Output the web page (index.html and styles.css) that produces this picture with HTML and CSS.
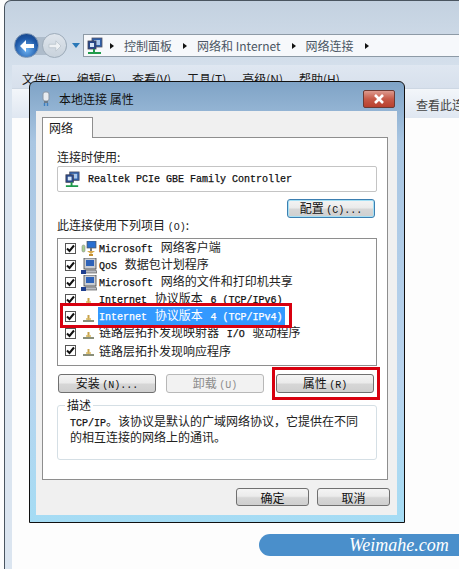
FILE: index.html
```html
<!DOCTYPE html>
<html lang="zh-CN">
<head>
  <meta charset="UTF-8">
  <title>本地连接 属性</title>
  <link rel="stylesheet" href="styles.css">
</head>
<body>

<svg class="defs" width="0" height="0">
  <symbol id="net" viewBox="0 0 18 18">
    <rect x="6" y="1" width="10" height="9" fill="#2f5fa8" stroke="#556" stroke-width=".8"/>
    <rect x="8" y="3" width="6" height="5" fill="#a9c8ee"/>
    <rect x="2" y="4" width="8" height="8" fill="#27498c" stroke="#445" stroke-width=".8"/>
    <rect x="4" y="6" width="4" height="4" fill="#d7e6f7"/>
    <path d="M8 12v3M2 16h13" stroke="#1f9a4b" stroke-width="2"/>
  </symbol>
  <symbol id="client" viewBox="0 0 16 16">
    <rect x="1" y="4" width="3" height="7" rx="1.5" fill="#a8cf8f" stroke="#888" stroke-width=".6"/>
    <rect x="6" y="0" width="9" height="7" fill="#2a6fd0" stroke="#555" stroke-width=".7"/>
    <path d="M10 7v3" stroke="#777" stroke-width="2"/>
    <path d="M6 10h8l-4 3z" fill="#d9a94a"/>
    <rect x="8" y="13" width="4" height="2" fill="#c58f30"/>
  </symbol>
  <symbol id="computer" viewBox="0 0 16 16">
    <rect x="3" y="0" width="12" height="11" fill="#c9ccd2" stroke="#444" stroke-width=".8"/>
    <rect x="5" y="2" width="8" height="6" fill="#2e62b8"/>
    <path d="M4 12h11l1 3H3z" fill="#b8bbc2" stroke="#444" stroke-width=".6"/>
    <rect x="0" y="12" width="5" height="4" fill="#1f3f8f"/>
  </symbol>
  <symbol id="proto" viewBox="0 0 16 16">
    <path d="M2 12h11" stroke="#8a8f7a" stroke-width="2"/>
    <path d="M7.5 6v5" stroke="#c8a24a" stroke-width="2"/>
    <path d="M5 10h5" stroke="#d8b860" stroke-width="1.5"/>
  </symbol>
  <symbol id="check" viewBox="0 0 9 9">
    <path d="M1 4.5l2.5 2.5L8 1.5" fill="none" stroke="#111" stroke-width="2"/>
  </symbol>
</svg>

<div class="explorer">
  <div class="address-row">
    <div class="nav-pill">
      <span class="nav-btn back">
        <svg width="16" height="14" viewBox="0 0 16 14"><path d="M1 7l6-6v4h8v4H7v4z" fill="#fff"/></svg>
      </span>
      <span class="nav-btn forward">
        <svg width="14" height="12" viewBox="0 0 16 14"><path d="M15 7L9 1v4H1v4h8v4z" fill="#eef1f4" stroke="#b4bec8" stroke-width=".8"/></svg>
      </span>
    </div>
    <span class="nav-drop"></span>
    <div class="address">
      <svg class="crumb-icon" width="18" height="18"><use href="#net"/></svg>
      <span class="arrow"></span>
      <span class="crumb">控制面板</span>
      <span class="arrow"></span>
      <span class="crumb">网络和 Internet</span>
      <span class="arrow"></span>
      <span class="crumb">网络连接</span>
      <span class="arrow"></span>
    </div>
  </div>

  <div class="menubar">
    <span>文件(F)</span><span>编辑(E)</span><span>查看(V)</span><span>工具(T)</span><span>高级(N)</span><span>帮助(H)</span>
  </div>
  <div class="cmdbar">查看此连</div>
  <div class="content"></div>
</div>

<div class="dialog">
  <div class="titlebar">
    <svg class="title-icon" width="10" height="16" viewBox="0 0 10 16">
      <rect x="2" y="1" width="6" height="9" rx="2" fill="#e8ecf0" stroke="#8a97a5"/>
      <rect x="3" y="10" width="4" height="2" fill="#6c7c8c"/>
      <path d="M3.5 12v3M6.5 12v3" stroke="#3d7fc0" stroke-width="1.4"/>
    </svg>
    <span class="title-text">本地连接 属性</span>
    <span class="close">
      <svg width="12" height="10" viewBox="0 0 12 10"><path d="M2 1l8 8M10 1L2 9" stroke="#fff" stroke-width="2.6"/></svg>
    </span>
  </div>

  <div class="dialog-body">
    <div class="tab">网络</div>
    <div class="panel">
      <div class="label first">连接时使用:</div>
      <div class="adapter">
        <svg width="17" height="17"><use href="#net"/></svg>
        <span class="mono">Realtek PCIe GBE Family Controller</span>
      </div>
      <div class="config-row"><button class="btn focus config">配置 <small>(C)...</small></button></div>
      <div class="label second">此连接使用下列项目 <small>(O)</small>:</div>

      <div class="list">
        <div class="row">
          <span class="check"><svg width="9" height="9"><use href="#check"/></svg></span>
          <svg class="row-icon" width="16" height="16"><use href="#client"/></svg>
          <span class="row-text"><span class="mono">Microsoft</span> 网络客户端</span>
        </div>
        <div class="row">
          <span class="check"><svg width="9" height="9"><use href="#check"/></svg></span>
          <svg class="row-icon" width="16" height="16"><use href="#computer"/></svg>
          <span class="row-text"><span class="mono">QoS</span> 数据包计划程序</span>
        </div>
        <div class="row">
          <span class="check"><svg width="9" height="9"><use href="#check"/></svg></span>
          <svg class="row-icon" width="16" height="16"><use href="#computer"/></svg>
          <span class="row-text"><span class="mono">Microsoft</span> 网络的文件和打印机共享</span>
        </div>
        <div class="row">
          <span class="check"><svg width="9" height="9"><use href="#check"/></svg></span>
          <svg class="row-icon" width="16" height="16"><use href="#proto"/></svg>
          <span class="row-text"><span class="mono">Internet</span> 协议版本 <span class="mono">6 (TCP/IPv6)</span></span>
        </div>
        <div class="row">
          <span class="check"><svg width="9" height="9"><use href="#check"/></svg></span>
          <svg class="row-icon" width="16" height="16"><use href="#proto"/></svg>
          <span class="row-text selected"><span class="mono">Internet</span> 协议版本 <span class="mono">4 (TCP/IPv4)</span></span>
        </div>
        <div class="row">
          <span class="check"><svg width="9" height="9"><use href="#check"/></svg></span>
          <svg class="row-icon" width="16" height="16"><use href="#proto"/></svg>
          <span class="row-text">链路层拓扑发现映射器 <span class="mono">I/O</span> 驱动程序</span>
        </div>
        <div class="row">
          <span class="check"><svg width="9" height="9"><use href="#check"/></svg></span>
          <svg class="row-icon" width="16" height="16"><use href="#proto"/></svg>
          <span class="row-text">链路层拓扑发现响应程序</span>
        </div>
      </div>

      <div class="action-row">
        <button class="btn">安装 <small>(N)...</small></button>
        <button class="btn disabled">卸载 <small>(U)</small></button>
        <button class="btn">属性 <small>(R)</small></button>
      </div>

      <div class="group">
        <span class="legend">描述</span>
        <p><span class="mono">TCP/IP</span>。该协议是默认的广域网络协议，它提供在不同<br>的相互连接的网络上的通讯。</p>
      </div>
    </div>
    <div class="dialog-buttons">
      <button class="btn">确定</button>
      <button class="btn">取消</button>
    </div>
  </div>
</div>

<div class="mark mark-list"></div>
<div class="mark mark-props"></div>

<div class="watermark">Weimahe.com</div>

</body>
</html>
```

FILE: styles.css
```css
html, body {
  margin: 0;
  height: 100%;
}
body {
  position: relative;
  width: 459px;
  height: 569px;
  overflow: hidden;
  background: #fdfdfd;
  font-family: "Noto Sans CJK SC", "Liberation Sans", sans-serif;
  font-size: 12px;
  color: #1a1a1a;
}
.defs {
  position: absolute;
}
button {
  font-family: inherit;
}
small {
  font-family: "Liberation Mono", monospace;
  font-size: 10px;
}
.mono {
  font-family: "Liberation Mono", monospace;
  font-size: 10px;
  color: #111;
  word-spacing: 0;
  -webkit-text-stroke: .25px #111;
}

/* explorer behind */
.explorer {
  box-sizing: border-box;
  height: 569px;
  margin-left: 4px;
  padding: 33px 0 0 7px;
  border: 1px solid #4a5560;
  border-right: none;
  border-bottom: none;
  border-radius: 7px 0 0 0;
  background: linear-gradient(#c3d1e0, #dbe5f0 90px);
}
.address-row {
  display: flex;
  align-items: center;
  height: 23px;
  margin-left: -7px;
  padding-left: 9px;
}
.nav-pill {
  display: flex;
  align-items: center;
  height: 18px;
  border-radius: 9px;
  background: #aebccb;
}
.nav-btn {
  display: flex;
  align-items: center;
  justify-content: center;
  box-sizing: border-box;
  width: 25px;
  height: 25px;
  border-radius: 50%;
}
.back {
  background: radial-gradient(circle at 50% 70%, #6db2f2, #1d57a6 60%, #163f7e);
  border: 1px solid #7d96b4;
}
.forward {
  margin-left: 3px;
  background: linear-gradient(#dfe5ec, #c8d2dc);
  border: 1px solid #9eacba;
}
.nav-drop {
  width: 0;
  height: 0;
  margin: 0 3px 0 5px;
  border: 4px solid transparent;
  border-top: 5px solid #2a78b8;
  border-bottom: none;
}
.address {
  display: flex;
  align-items: center;
  flex: 1;
  box-sizing: border-box;
  height: 23px;
  padding-left: 2px;
  border: 1px solid #8d9aa6;
  border-right: none;
  background: #f6f8fb;
  color: #4a5663;
  font-size: 12px;
  white-space: nowrap;
}
.crumb-icon {
  margin-right: 6px;
}
.arrow {
  width: 0;
  height: 0;
  margin-right: 10px;
  border: 3.5px solid transparent;
  border-left: 4px solid #111;
  border-right: none;
}
.crumb {
  margin-right: 11px;
}
.menubar {
  display: flex;
  gap: 16px;
  box-sizing: border-box;
  height: 23px;
  margin-top: 8px;
  padding: 6px 0 0 10px;
  background: linear-gradient(#dfe7f1, #d7e0ec);
  font-size: 12px;
  line-height: 16px;
}
.cmdbar {
  box-sizing: border-box;
  height: 30px;
  padding: 8px 0 0 404px;
  border-top: 1px solid #cdd7e3;
  background: linear-gradient(#f3f6fa, #dfe7f1);
  color: #444;
  line-height: 16px;
  white-space: nowrap;
  overflow: hidden;
}
.content {
  height: 451px;
  background: #fdfdfd;
}

/* dialog */
.dialog {
  position: absolute;
  left: 29px;
  top: 81px;
  box-sizing: border-box;
  width: 376px;
  height: 442px;
  padding: 0 7px 7px 6px;
  border: 1px solid #111;
  border-radius: 6px 6px 0 0;
  background: linear-gradient(#7fa3c6, #a9c6e2 60px, #b9d4ee 300px, #a5dcf4);
}
.titlebar {
  display: flex;
  align-items: center;
  box-sizing: border-box;
  height: 29px;
  padding: 4px 0 0 5px;
}
.title-icon {
  margin-right: 8px;
}
.title-text {
  font-size: 12px;
  color: #111;
}
.close {
  display: flex;
  align-items: center;
  justify-content: center;
  width: 30px;
  height: 16px;
  margin-left: auto;
  margin-right: 2px;
  border: 1px solid #6b3a34;
  border-radius: 2px;
  background: linear-gradient(#dd9a8e, #c65a48 50%, #b8402e);
}
.dialog-body {
  box-sizing: border-box;
  height: 404px;
  padding: 6px 7px 0 6px;
  background: #f0f0f0;
}
.tab {
  position: relative;
  z-index: 1;
  box-sizing: border-box;
  width: 51px;
  height: 21px;
  margin-bottom: -1px;
  padding-left: 6px;
  border: 1px solid #8e8e8e;
  border-bottom: none;
  background: #fff;
  line-height: 19px;
  font-size: 12px;
}
.panel {
  box-sizing: border-box;
  width: 346px;
  height: 343px;
  padding: 0 10px 0 14px;
  border: 1px solid #8e8e8e;
  background: #fff;
}
.label {
  line-height: 16px;
  color: #222;
}
.label.first {
  margin-top: 11px;
}
.label.second {
  margin-top: -1px;
}
.adapter {
  display: flex;
  align-items: center;
  gap: 7px;
  box-sizing: border-box;
  height: 26px;
  margin-top: 1px;
  padding-left: 6px;
  border: 1px solid #c4c4c4;
  border-radius: 2px;
}
.config-row {
  display: flex;
  justify-content: flex-end;
  margin-top: 7px;
  padding-right: 2px;
}
.btn {
  box-sizing: border-box;
  height: 19px;
  padding: 0;
  border: 1px solid #707070;
  border-radius: 3px;
  background: linear-gradient(#f4f4f4 0, #ebebeb 45%, #d6d6d6 55%, #cfcfcf);
  font-size: 12px;
  line-height: 15px;
  color: #111;
}
.btn.focus {
  border-color: #3c7fb1;
  box-shadow: inset 0 0 0 1px #a5e0f5;
}
.btn.disabled {
  border-color: #b8b8b8;
  background: #f2f2f2;
  color: #8c8c8c;
}
.config {
  width: 88px;
}
.list {
  box-sizing: border-box;
  height: 128px;
  margin-top: 2px;
  padding-top: 1px;
  border: 1px solid #8e8e8e;
}
.row {
  display: flex;
  align-items: center;
  height: 17px;
  white-space: nowrap;
}
.check {
  display: flex;
  align-items: center;
  justify-content: center;
  box-sizing: border-box;
  width: 11px;
  height: 11px;
  margin-left: 7px;
  border: 1px solid #555;
  background: #fff;
}
.row-icon {
  flex: none;
  margin: 0 1px 0 5px;
}
.row-text {
  padding: 0 1px;
  line-height: 16px;
  color: #222;
  word-spacing: 5px;
}
.row-text.selected {
  padding-right: 3px;
  background: #3399ff;
  color: #fff;
}
.row-text.selected .mono {
  color: #fff;
  -webkit-text-stroke-color: #fff;
}
.action-row {
  display: flex;
  gap: 10px;
  margin: 8px 1px 0;
}
.action-row .btn {
  width: 98px;
  height: 19px;
}
.action-row .btn:last-child {
  margin-left: 2px;
}
.group {
  position: relative;
  box-sizing: border-box;
  height: 55px;
  margin-top: 12px;
  padding: 8px 6px 0 12px;
  border: 1px solid #d5dfe5;
  border-radius: 3px;
}
.legend {
  position: absolute;
  left: 7px;
  top: -8px;
  padding: 0 2px;
  background: #fff;
  line-height: 14px;
}
.group p {
  margin: 0;
  font-size: 12px;
  line-height: 13px;
  color: #222;
}
.dialog-buttons {
  display: flex;
  justify-content: flex-end;
  gap: 8px;
  margin-top: 8px;
}
.dialog-buttons .btn {
  width: 73px;
  height: 18px;
}

/* red annotation boxes */
.mark {
  position: absolute;
  box-sizing: border-box;
  border: 3px solid #d8000f;
}
.mark-list {
  left: 60px;
  top: 303px;
  width: 232px;
  height: 25px;
}
.mark-props {
  left: 272px;
  top: 367px;
  width: 108px;
  height: 33px;
}

.watermark {
  position: absolute;
  left: 259px;
  top: 534px;
  box-sizing: border-box;
  width: 200px;
  height: 22px;
  padding-left: 90px;
  border-radius: 11px 0 0 11px;
  background: #4a8fcb;
  color: #fff;
  font-family: "Liberation Serif", serif;
  font-style: italic;
  font-size: 18px;
  line-height: 22px;
}
```
